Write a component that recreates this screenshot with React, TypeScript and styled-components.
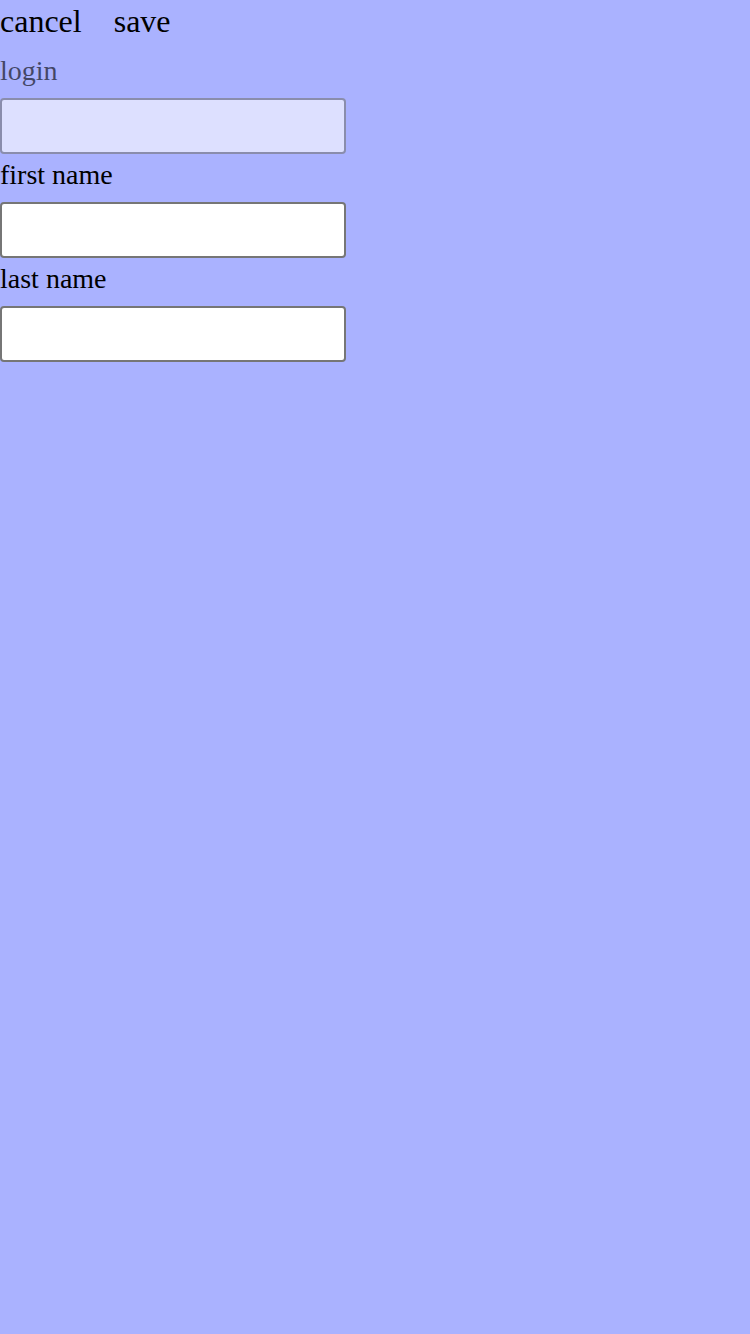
import React, { useState } from 'react'
import styled, { createGlobalStyle } from 'styled-components'

const GlobalStyle = createGlobalStyle`
  html, body {
    margin: 0;
    padding: 0;
    background: #aab2ff;
  }
  body {
    font-family: "Liberation Serif", "Times New Roman", serif;
    color: #000;
  }
`

const Page = styled.div`
  display: flex;
  flex-direction: column;
  align-items: flex-start;
  min-height: 100vh;
  background: #aab2ff;
`

const Toolbar = styled.div`
  display: flex;
  flex-direction: row;
  align-items: flex-start;
  gap: 32px;
  padding-top: 3px;
  height: 54px;
  box-sizing: border-box;
`

const ToolButton = styled.button`
  background: none;
  border: none;
  padding: 0;
  margin: 0;
  font-family: "Liberation Serif", "Times New Roman", serif;
  font-size: 32px;
  line-height: 37px;
  color: #000;
  cursor: pointer;
`

const Field = styled.div<{ $disabled?: boolean }>`
  display: flex;
  flex-direction: column;
  align-items: flex-start;
  margin-bottom: 4px;
  opacity: ${p => (p.$disabled ? 0.6 : 1)};
`

const Label = styled.label`
  font-size: 28px;
  line-height: 32px;
  padding-top: 1px;
  margin-bottom: 11px;
`

const TextInput = styled.input`
  width: 346px;
  height: 56px;
  box-sizing: border-box;
  margin: 0;
  padding: 0 8px;
  border: 2px solid #767676;
  border-radius: 4px;
  background: #fff;
  font-family: "Liberation Serif", "Times New Roman", serif;
  font-size: 28px;
  color: #000;
  outline: none;
`

function App() {
  const [firstName, setFirstName] = useState('')
  const [lastName, setLastName] = useState('')

  return (
    <>
      <GlobalStyle />
      <Page>
        <Toolbar>
          <ToolButton>cancel</ToolButton>
          <ToolButton>save</ToolButton>
        </Toolbar>
        <Field $disabled>
          <Label>login</Label>
          <TextInput disabled />
        </Field>
        <Field>
          <Label>first name</Label>
          <TextInput value={firstName} onChange={e => setFirstName(e.target.value)} />
        </Field>
        <Field>
          <Label>last name</Label>
          <TextInput value={lastName} onChange={e => setLastName(e.target.value)} />
        </Field>
      </Page>
    </>
  )
}

export default App
